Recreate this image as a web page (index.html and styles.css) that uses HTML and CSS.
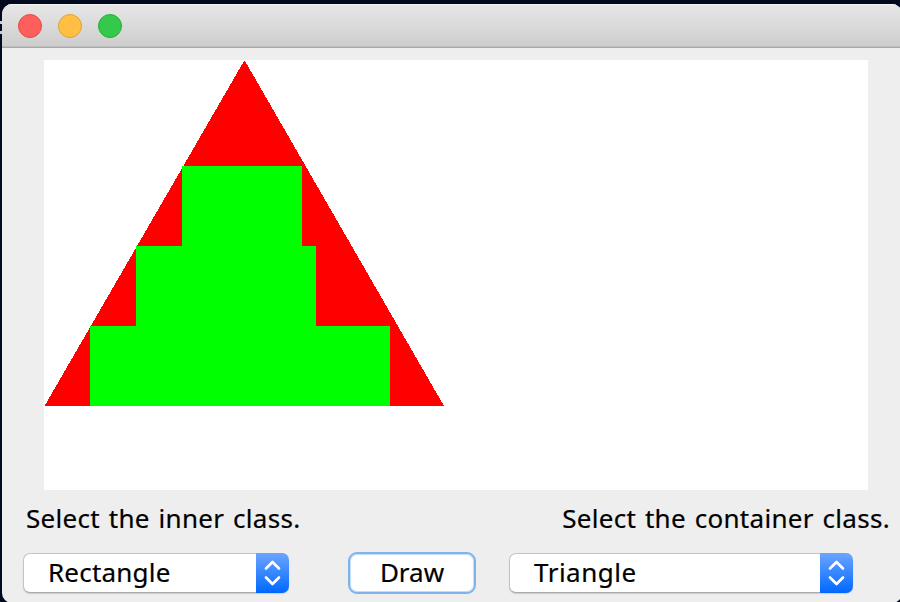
FILE: index.html
```html
<!DOCTYPE html>
<html lang="en">
<head>
<meta charset="utf-8">
<title>Shapes</title>
<link rel="stylesheet" href="styles.css">
</head>
<body>
<main class="window">
  <header class="titlebar">
    <span class="light close"></span>
    <span class="light minimize"></span>
    <span class="light maximize"></span>
  </header>
  <svg class="canvas" viewBox="0 0 824 430" shape-rendering="crispEdges">
    <path fill="#f00" d="M200 1h1L400 346H0.500z"/>
    <path fill="#0f0" d="M138 106h120v80h14v80h74v80H46v-80h46v-80h46z"/>
  </svg>
  <div class="labels">
    <span class="label">Select the inner class.</span>
    <span class="label">Select the container class.</span>
  </div>
  <div class="controls">
    <div class="select select-inner">
      <span class="value rectangle">Rectangle</span>
      <span class="stepper"><svg width="33" height="40" viewBox="0 0 33 40"><path d="M10 15.500l6.500-6.500 6.500 6.500M10 24.500l6.500 6.500 6.500-6.500"/></svg></span>
    </div>
    <button class="draw"><span>Draw</span></button>
    <div class="select select-container">
      <span class="value triangle">Triangle</span>
      <span class="stepper"><svg width="33" height="40" viewBox="0 0 33 40"><path d="M10 15.500l6.500-6.500 6.500 6.500M10 24.500l6.500 6.500 6.500-6.500"/></svg></span>
    </div>
  </div>
</main>
</body>
</html>
```
FILE: styles.css
```css
* { box-sizing: border-box; }
html { height: 100%; overflow: hidden; }
body {
  margin: 0;
  height: 602px;
  padding: 4px 0 0 2px;
  overflow: hidden;
  background:
    linear-gradient(#ccc, #ccc) 0 21px / 2px 3px no-repeat,
    linear-gradient(#ccc, #ccc) 0 31px / 2px 3px no-repeat,
    #020a20;
  font-family: "Noto Sans", "Open Sans", sans-serif;
  font-size: 26px;
  color: #000;
  -webkit-text-stroke: 0.2px #000;
}
.window {
  width: 900px;
  height: 599px;
  border-radius: 10px;
  overflow: hidden;
  background: #eee;
}
.titlebar {
  display: flex;
  align-items: center;
  gap: 16px;
  height: 44px;
  padding-left: 16px;
  background: linear-gradient(#e7e7e7, #cdcdcd);
  border-bottom: 1px solid #a9a7a9;
  box-shadow: inset 0 1px #f3f3f3, inset 0 -1px #bebdbe;
}
.light {
  width: 24px;
  height: 24px;
  border: 1px solid;
  border-radius: 50%;
}
.close { background: #fd605c; border-color: #e24a46; }
.minimize { background: #febf43; border-color: #e0a03a; }
.maximize { background: #34c94b; border-color: #28ac38; }
.canvas {
  display: block;
  width: 824px;
  height: 430px;
  margin: 12px 0 0 42px;
  background: #fff;
}
.labels {
  display: flex;
  justify-content: space-between;
  height: 62px;
  padding: 10px 12px 0 24px;
  line-height: 36px;
  white-space: nowrap;
}
.label {
  letter-spacing: 0.3px;
  word-spacing: 1.7px;
}
.controls {
  display: flex;
  align-items: center;
  padding-left: 21px;
}
.select {
  display: flex;
  height: 40px;
  border-radius: 7px;
  background: #fff;
  border: 1px solid #c4c4c4;
  border-bottom-color: #aaa;
  border-right: 0;
  box-shadow: 0 1px 1px #ccc;
}
.select-inner { width: 266px; }
.select-container { width: 344px; }
.value {
  flex: 1;
  padding-left: 24px;
  line-height: 36px;
}
.rectangle { letter-spacing: 0.2px; }
.triangle { letter-spacing: 0.5px; }
.stepper {
  width: 33px;
  height: 40px;
  margin-top: -1px;
  border-radius: 0 7px 7px 0;
  background: linear-gradient(#6ca5ff, #0068ff);
}
.stepper svg { display: block; }
.stepper path {
  fill: none;
  stroke: #fff;
  stroke-width: 2.6;
  stroke-linecap: round;
  stroke-linejoin: round;
}
.draw {
  width: 128px;
  height: 42px;
  margin: 0 33px 0 59px;
  padding: 0 0 2px;
  border: 2px solid #7fb3ec;
  border-radius: 9px;
  background: #fff;
  box-shadow: inset 0 0 0 1px #c3dcf8;
  font: inherit;
  line-height: 36px;
  color: inherit;
}
```
